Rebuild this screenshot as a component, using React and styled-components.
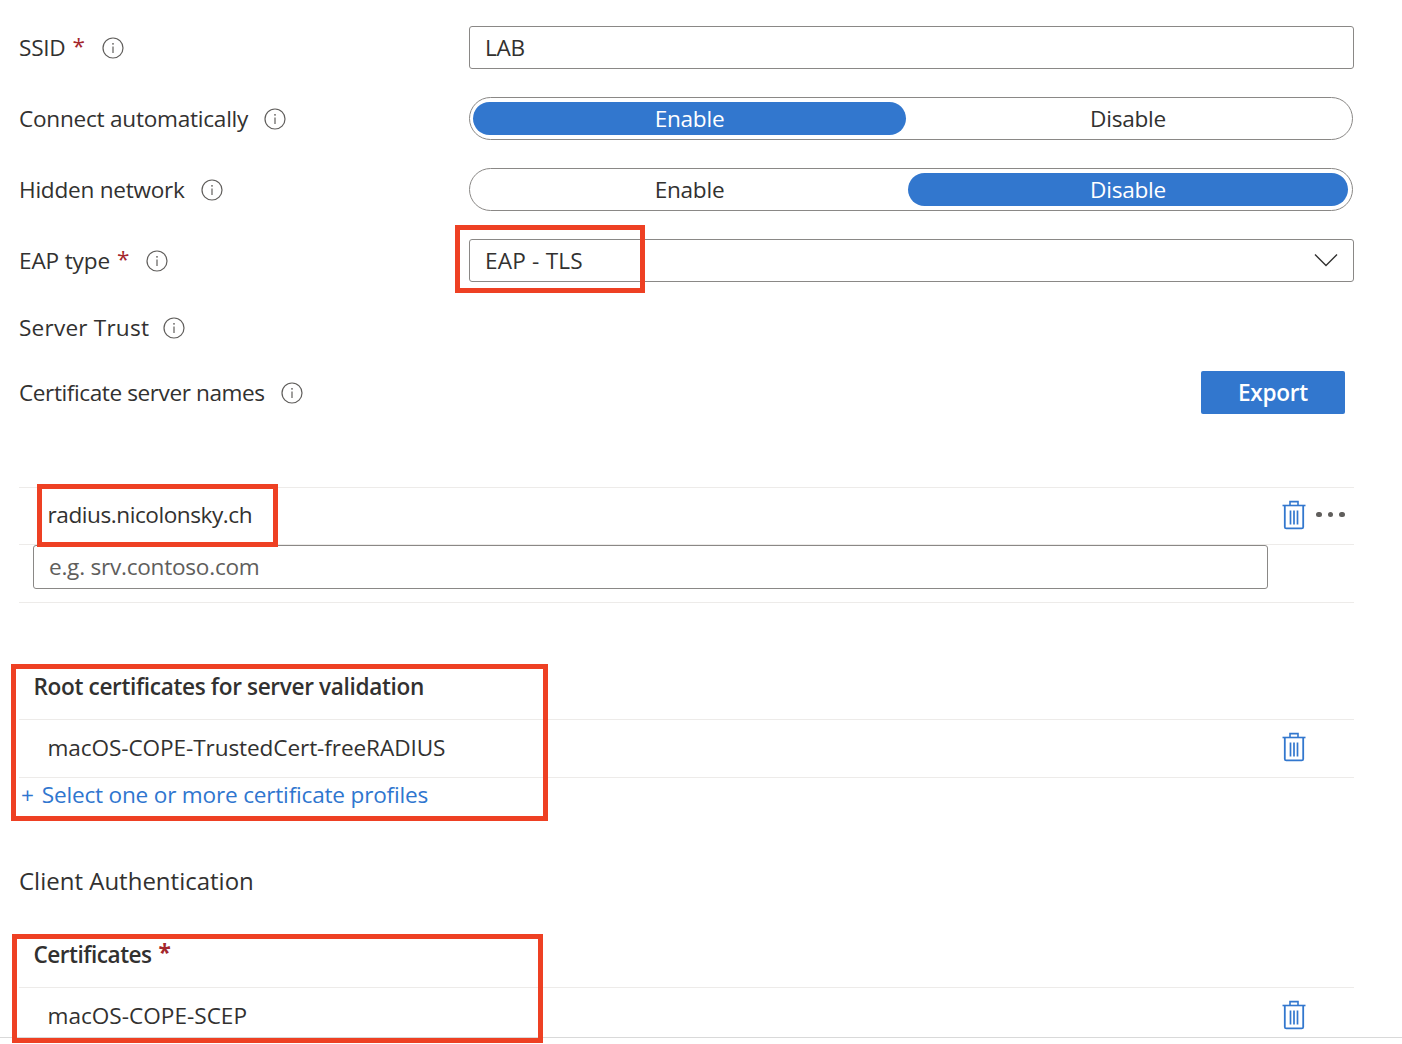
import React from "react";
import styled, { createGlobalStyle } from "styled-components";

const GlobalStyle = createGlobalStyle`
  html, body {
    margin: 0;
    padding: 0;
    background: #fff;
  }
  body {
    font-family: "Open Sans", "Noto Sans", "Liberation Sans", sans-serif;
    color: #323130;
    overflow: hidden;
  }
`;

const Page = styled.div`
  position: relative;
  width: 1402px;
  height: 1044px;
  overflow: hidden;
  box-sizing: border-box;
  padding: 26px 48px 0 19px;
`;

const FormRow = styled.div`
  display: grid;
  grid-template-columns: 450px 885px;
  align-items: center;
  height: 43px;
  margin-bottom: 28px;
`;

const Label = styled.div`
  display: flex;
  align-items: center;
  font-size: 22.6px;
  line-height: 30px;
  letter-spacing: ${(p) => p.$track ?? -0.25}px;
  white-space: nowrap;
`;

const Star = styled.span`
  color: #a4262c;
  margin-left: 7px;
  position: relative;
  top: -2px;
  font-weight: ${(p) => (p.$bold ? 700 : 400)};
`;

const InfoWrap = styled.svg`
  width: 22px;
  height: 22px;
  margin-left: ${(p) => p.$gap || 16}px;
  flex: none;
`;

const TextBox = styled.div`
  box-sizing: border-box;
  height: ${(p) => p.$height || 43}px;
  width: ${(p) => p.$width || "100%"};
  border: 1px solid #8a8886;
  border-radius: 3px;
  display: flex;
  align-items: center;
  justify-content: space-between;
  padding: 0 15px 1px 15px;
  font-size: 22.6px;
  letter-spacing: ${(p) => p.$track ?? -0.25}px;
  color: ${(p) => (p.$placeholder ? "#605e5c" : "#323130")};
`;

const Toggle = styled.div`
  box-sizing: border-box;
  width: 884px;
  height: 43px;
  border: 1px solid #8a8886;
  border-radius: 22px;
  display: grid;
  grid-template-columns: 433px 440px;
  gap: 2px;
  padding: 4px 4px 4px 3px;
`;

const ToggleOption = styled.div`
  border-radius: 17px;
  display: flex;
  align-items: center;
  justify-content: center;
  font-size: 22.6px;
  letter-spacing: -0.25px;
  background: ${(p) => (p.$on ? "#3277ce" : "transparent")};
  color: ${(p) => (p.$on ? "#fff" : "#323130")};
`;

const LabelOnly = styled.div`
  height: 30px;
  margin-top: 31px;
`;

const ExportRow = styled.div`
  display: flex;
  align-items: center;
  justify-content: space-between;
  width: 1326px;
  height: 43px;
  margin-top: 28px;
  margin-bottom: 73px;
`;

const ExportButton = styled.div`
  width: 144px;
  height: 43px;
  background: #3277ce;
  border-radius: 2px;
  color: #fff;
  font-size: 22.6px;
  font-weight: 600;
  letter-spacing: -0.25px;
  display: flex;
  align-items: center;
  justify-content: center;
`;

const Table = styled.div`
  width: 1335px;
`;

const ListRow = styled.div`
  box-sizing: border-box;
  height: ${(p) => p.$height}px;
  border-top: 1px solid #edebe9;
  padding: 0 8px 3px 28.5px;
  display: flex;
  align-items: center;
  justify-content: space-between;
  font-size: 22.6px;
  letter-spacing: ${(p) => p.$track ?? -0.25}px;
`;

const Actions = styled.div`
  display: flex;
  align-items: center;
  gap: 10px;
  width: 64px;
`;

const Dots = styled.div`
  display: flex;
  gap: 6px;
`;

const Dot = styled.span`
  width: 5.5px;
  height: 5.5px;
  border-radius: 50%;
  background: #605e5c;
`;

const InputRow = styled.div`
  box-sizing: border-box;
  height: 59px;
  border-top: 1px solid #edebe9;
  border-bottom: 1px solid #edebe9;
  padding-left: 14px;
`;

const Heading = styled.div`
  box-sizing: border-box;
  height: ${(p) => p.$height}px;
  margin-top: ${(p) => p.$top}px;
  padding-left: 14.5px;
  font-size: 22.6px;
  line-height: 30px;
  font-weight: 600;
  letter-spacing: ${(p) => p.$track ?? -0.25}px;
`;

const AddLink = styled.div`
  display: flex;
  gap: 8px;
  border-top: 1px solid #edebe9;
  padding: 2px 0 0 2px;
  height: 34px;
  box-sizing: border-box;
  font-size: 22.6px;
  line-height: 30px;
  letter-spacing: -0.2px;
  color: #2f76cf;
`;

const SectionTitle = styled.div`
  margin-top: 54px;
  font-size: 24px;
  line-height: 32px;
  letter-spacing: 0;
`;

const BottomRule = styled.div`
  position: absolute;
  left: 0;
  right: 0;
  top: 1037px;
  border-top: 1px solid #d9d9d9;
`;

const Callout = styled.div`
  position: absolute;
  box-sizing: border-box;
  left: ${(p) => p.$x}px;
  top: ${(p) => p.$y}px;
  width: ${(p) => p.$w}px;
  height: ${(p) => p.$h}px;
  border: 5px solid #ee4023;
`;

const Info = ({ gap }) => (
  <InfoWrap $gap={gap} viewBox="0 0 22 22" fill="none">
    <circle cx="11" cy="11" r="10" stroke="#605e5c" strokeWidth="1.2" />
    <path d="M11 9.6v6.4" stroke="#605e5c" strokeWidth="1.2" />
    <circle cx="11" cy="6.8" r="0.9" fill="#605e5c" />
  </InfoWrap>
);

const Trash = () => (
  <svg width="24" height="30" viewBox="0 0 24 30" fill="none" stroke="#3277ce">
    <path d="M0.5 5.5h23" strokeWidth="1.6" />
    <path d="M8 5V1.6h8V5" strokeWidth="1.6" />
    <path d="M2.8 5.5v21.4c0 .9.6 1.5 1.5 1.5h15.4c.9 0 1.5-.6 1.5-1.5V5.5" strokeWidth="1.8" />
    <path d="M8.5 10.5v14M12 10.5v14M15.5 10.5v14" strokeWidth="1.7" />
  </svg>
);

const Chevron = () => (
  <svg width="24" height="14" viewBox="0 0 24 14" fill="none">
    <path d="M1 1.5l11 11 11-11" stroke="#323130" strokeWidth="1.4" />
  </svg>
);

export default function App() {
  return (
    <Page>
      <GlobalStyle />
      <FormRow>
        <Label>
          SSID<Star>*</Star>
          <Info gap={17} />
        </Label>
        <TextBox>LAB</TextBox>
      </FormRow>
      <FormRow>
        <Label>
          Connect automatically
          <Info />
        </Label>
        <Toggle>
          <ToggleOption $on>Enable</ToggleOption>
          <ToggleOption>Disable</ToggleOption>
        </Toggle>
      </FormRow>
      <FormRow>
        <Label>
          Hidden network
          <Info />
        </Label>
        <Toggle>
          <ToggleOption>Enable</ToggleOption>
          <ToggleOption $on>Disable</ToggleOption>
        </Toggle>
      </FormRow>
      <FormRow>
        <Label $track={-0.15}>
          EAP type<Star>*</Star>
          <Info gap={17} />
        </Label>
        <TextBox $track={0.2}>
          EAP - TLS
          <Chevron />
        </TextBox>
      </FormRow>

      <LabelOnly>
        <Label $track={0.2}>
          Server Trust
          <Info gap={14} />
        </Label>
      </LabelOnly>

      <ExportRow>
        <Label $track={-0.42}>
          Certificate server names
          <Info />
        </Label>
        <ExportButton>Export</ExportButton>
      </ExportRow>

      <Table>
        <ListRow $height={57} $track={-0.45}>
          radius.nicolonsky.ch
          <Actions>
            <Trash />
            <Dots>
              <Dot />
              <Dot />
              <Dot />
            </Dots>
          </Actions>
        </ListRow>
        <InputRow>
          <TextBox $placeholder $width="1235px" $height={44}>
            e.g. srv.contoso.com
          </TextBox>
        </InputRow>

        <Heading $top={69} $height={47} $track={-0.35}>
          Root certificates for server validation
        </Heading>
        <ListRow $height={58} $track={-0.1}>
          macOS-COPE-TrustedCert-freeRADIUS
          <Actions>
            <Trash />
          </Actions>
        </ListRow>
        <AddLink>
          <span>+</span>
          <span>Select one or more certificate profiles</span>
        </AddLink>

        <SectionTitle>Client Authentication</SectionTitle>

        <Heading $top={43} $height={47} $track={-0.5}>
          Certificates<Star $bold>*</Star>
        </Heading>
        <ListRow $height={58} $track={0}>
          macOS-COPE-SCEP
          <Actions>
            <Trash />
          </Actions>
        </ListRow>
      </Table>

      <BottomRule />

      <Callout $x={455} $y={225} $w={190} $h={68} />
      <Callout $x={37} $y={484} $w={241} $h={63} />
      <Callout $x={11} $y={664} $w={537} $h={157} />
      <Callout $x={12} $y={934} $w={531} $h={109} />
    </Page>
  );
}
